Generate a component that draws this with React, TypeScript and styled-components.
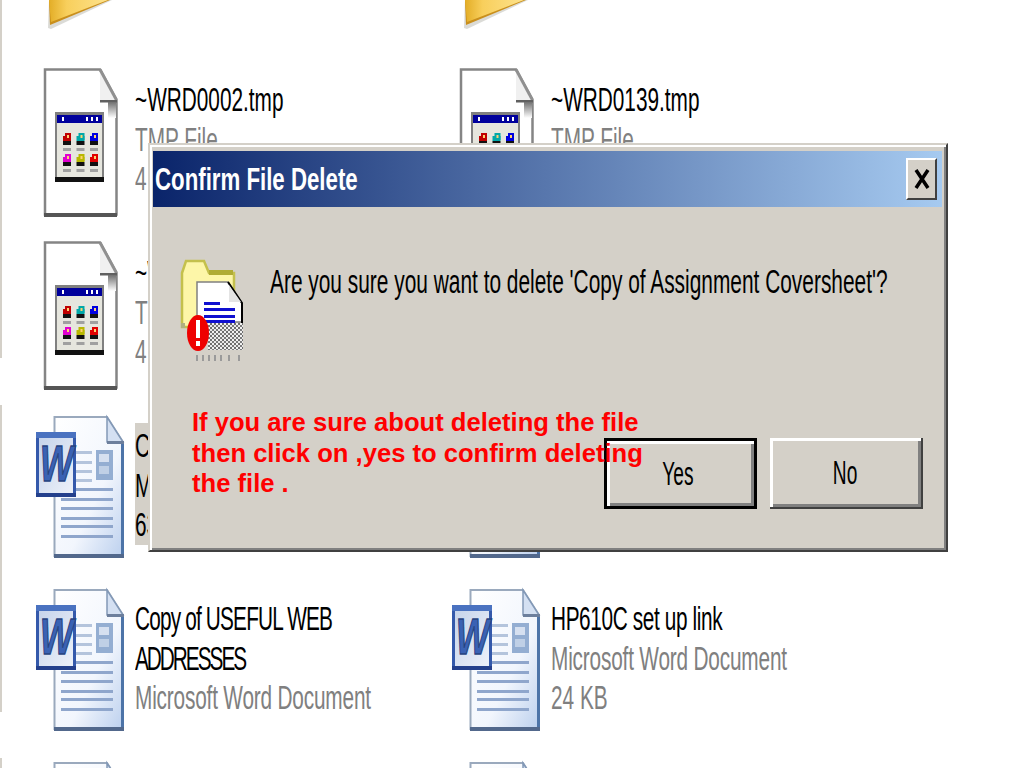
import styled, { createGlobalStyle } from "styled-components";

const GlobalStyle = createGlobalStyle`
    html, body {
        margin: 0;
        background: #fff;
        overflow: hidden;
    }
`

const Page = styled.div`
    position: relative;
    display: flex;
    width: 1024px;
    height: 768px;
    overflow: hidden;
    background: #fff;
    font-family: "Liberation Sans", Arial, sans-serif;
`

const Rail = styled.div`
    display: flex;
    flex-direction: column;
    flex: none;
    width: 2px;
    height: 100%;
`

const RailPiece = styled.div<{ $h: number; $on?: boolean }>`
    flex: none;
    height: ${p => p.$h}px;
    background: ${p => (p.$on ? "#d4d0c8" : "transparent")};
`

const FileGrid = styled.div`
    display: grid;
    grid-template-columns: 416px 416px;
    grid-template-rows: 68px repeat(4, 173px);
    padding-left: 34px;
`

const Tile = styled.div`
    display: flex;
    align-items: flex-start;
    height: 173px;
`

const FolderTile = styled.div`
    height: 68px;
    padding-left: 10px;
`

const IconBox = styled.div`
    flex: none;
    width: 99px;
    svg {
        display: block;
    }
`

const TileText = styled.div<{ $selected?: boolean }>`
    margin-top: ${p => (p.$selected ? 9 : 12)}px;
    padding-top: ${p => (p.$selected ? 3 : 0)}px;
    font-size: 33px;
    line-height: 39.5px;
    white-space: nowrap;
    color: ${p => (p.$selected ? "#000" : "#808080")};
    background: ${p => (p.$selected ? "#d4d0c8" : "transparent")};
    transform: scaleX(0.63);
    transform-origin: left top;
`

const FileName = styled.div<{ $tight?: number }>`
    color: #000;
    letter-spacing: ${p => p.$tight ?? 0}px;
`

const FileMeta = styled.div<{ $tight?: number }>`
    letter-spacing: ${p => p.$tight ?? 0}px;
`

const Dialog = styled.div`
    position: absolute;
    left: 148px;
    top: 143px;
    box-sizing: border-box;
    display: flex;
    flex-direction: column;
    width: 800px;
    height: 409px;
    padding: 6px 4px 0 3px;
    background: #d4d0c8;
    border: 2px solid;
    border-color: #d4d0c8 #404040 #404040 #d4d0c8;
    box-shadow: inset 2px 2px 0 #fff, inset -2px -2px 0 #808080;
`

const TitleBar = styled.div`
    display: flex;
    flex: none;
    align-items: center;
    justify-content: space-between;
    height: 56px;
    padding: 0 5px 0 2px;
    background: linear-gradient(90deg, #0a246a, #a6caf0);
`

const TitleText = styled.div`
    font-size: 32px;
    font-weight: 700;
    color: #fff;
    white-space: nowrap;
    transform: scaleX(0.695);
    transform-origin: left center;
`

const CloseButton = styled.button`
    box-sizing: border-box;
    display: flex;
    flex: none;
    align-items: center;
    justify-content: center;
    width: 31px;
    height: 42px;
    padding: 0;
    background: #d4d0c8;
    border: 2px solid;
    border-color: #fff #404040 #404040 #fff;
    svg {
        display: block;
    }
`

const DialogBody = styled.div`
    display: flex;
    align-items: flex-start;
    gap: 22px;
    padding: 48px 0 0 25px;
`

const DialogIcon = styled.div`
    flex: none;
    width: 70px;
    svg {
        display: block;
    }
`

const Message = styled.div`
    flex: none;
    margin-top: 7px;
    font-size: 33px;
    line-height: 40px;
    color: #000;
    white-space: nowrap;
    transform: scaleX(0.633);
    transform-origin: left top;
`

const Note = styled.div`
    position: absolute;
    left: 42px;
    top: 262px;
    z-index: 2;
    font-size: 25.6px;
    font-weight: 700;
    line-height: 30.5px;
    color: #f00;
    white-space: nowrap;
`

const ButtonRow = styled.div`
    display: flex;
    justify-content: flex-end;
    gap: 13px;
    margin-top: auto;
    padding: 0 19px 41px 0;
`

const DialogButton = styled.button<{ $primary?: boolean }>`
    box-sizing: border-box;
    width: 153px;
    height: 71px;
    padding: ${p => (p.$primary ? "0 6px 0 0" : "0 1px 0 0")};
    font-family: inherit;
    font-size: 33px;
    color: #000;
    background: #d4d0c8;
    border: ${p => (p.$primary ? "3px solid #000" : "0")};
    box-shadow: inset 3px 3px 0 #fff, inset -3px -3px 0 #808080;
    ${p => !p.$primary && "border-bottom: 2px solid #404040; border-right: 2px solid #404040;"}
`

const ButtonLabel = styled.span`
    display: inline-block;
    transform: scaleX(0.58);
`

const Folder = ({ id }: { id: string }) => (
    <svg width="70" height="30" viewBox="0 0 70 30">
        <defs>
            <linearGradient id={`folder${id}`} x1="0" y1="0" x2="1" y2="0">
                <stop offset="0" stopColor="#e3ad26" />
                <stop offset="0.3" stopColor="#f8cf5c" />
                <stop offset="1" stopColor="#fde28c" />
            </linearGradient>
        </defs>
        <polygon points="3,0 66,0 5,29 2,28" fill="#b8b8b0" opacity="0.5" />
        <polygon points="3,0 64,0 4,25" fill="#c98f1c" />
        <polygon points="3,0 62,0 5,22" fill={`url(#folder${id})`} />
    </svg>
)

const appColors = ["#c00000", "#00a8a8", "#0000e0", "#e000d0", "#b8b800", "#e00000"]

const TmpIcon = ({ id }: { id: string }) => (
    <svg width="90" height="150" viewBox="0 0 90 150">
        <defs>
            <linearGradient id={`shade${id}`} x1="0" y1="0" x2="0" y2="1">
                <stop offset="0" stopColor="#707070" />
                <stop offset="1" stopColor="#ffffff" />
            </linearGradient>
        </defs>
        <path d="M9 1.500H64L80.500 32V146.500H9Z" fill="#fff" stroke="#858585" strokeWidth="2.500" />
        <path d="M64 1.500V32H80.500Z" fill="#f0f0f0" />
        <path d="M64 1.500L80.500 32" stroke="#909090" strokeWidth="3" fill="none" />
        <rect x="64" y="32" width="17" height="2.500" fill="#606060" />
        <rect x="72" y="34" width="8" height="16" fill={`url(#shade${id})`} />
        <rect x="8" y="145" width="73" height="4" fill="#555" />
        <rect x="19" y="44" width="49" height="70" fill="#808080" />
        <rect x="21" y="47" width="45" height="8" fill="#00009c" />
        <rect x="26" y="49" width="2" height="4" fill="#fff" />
        <rect x="50" y="49" width="2" height="4" fill="#fff" />
        <rect x="55" y="49" width="2" height="4" fill="#fff" />
        <rect x="60" y="49" width="2" height="4" fill="#fff" />
        <rect x="21" y="55" width="45" height="54" fill="#e6e6de" />
        <rect x="19" y="109" width="49" height="5" fill="#111" />
        {appColors.map((c, i) => {
            const x = 31 + (i % 3) * 13.5
            const y = i < 3 ? 65 : 86
            return (
                <g key={c + i}>
                    <rect x={x - 4} y={y + 3} width="8" height="5" fill={c} />
                    <rect x={x - 2} y={y} width="6" height="7" fill={c} />
                    <rect x={x} y={y + 2} width="2" height="3" fill="#ffd070" />
                    <rect x={x - 4} y={y + 8} width="8" height="4" fill="#111" />
                    <rect x={x - 4} y={y + 15} width="8" height="3" fill="#a0a0a0" />
                </g>
            )
        })}
    </svg>
)

const shortLines = [37, 47, 56, 65]
const longLines = [74, 84, 93, 103, 111, 121]

const WordIcon = ({ id, badge = true }: { id: string; badge?: boolean }) => (
    <svg width="90" height="146" viewBox="0 0 90 146">
        <defs>
            <linearGradient id={`page${id}`} x1="0" y1="0" x2="1" y2="1">
                <stop offset="0" stopColor="#ffffff" />
                <stop offset="0.6" stopColor="#f2f6fd" />
                <stop offset="1" stopColor="#bcd0ee" />
            </linearGradient>
            <linearGradient id={`badge${id}`} x1="0" y1="0" x2="1" y2="1">
                <stop offset="0" stopColor="#c4d2ea" />
                <stop offset="1" stopColor="#eef2fa" />
            </linearGradient>
        </defs>
        <path d="M18.500 3H71L87 28V142H18.500Z" fill={`url(#page${id})`} stroke="#9aa9bd" strokeWidth="2" />
        <path d="M71 3V28H87Z" fill="#d4e0f2" stroke="#8298b6" strokeWidth="1.500" />
        <rect x="71" y="27" width="17" height="3" fill="#6d7f9c" />
        <rect x="85" y="30" width="3" height="112" fill="#4d74a8" />
        <rect x="18" y="140" width="70" height="4" fill="#52688c" />
        <rect x="60" y="36" width="17" height="30" fill="#94aed2" />
        <rect x="63" y="40" width="10" height="8" fill="#d6e0f0" />
        <rect x="63" y="52" width="10" height="8" fill="#c0d0e6" />
        {shortLines.map(y => (
            <rect key={y} x="40" y={y} width="16" height="3" fill="#b4c4dc" />
        ))}
        {longLines.map(y => (
            <rect key={y} x="25" y={y} width="52" height="3" fill="#8fa6cc" />
        ))}
        {badge && (
            <>
                <rect x="1.500" y="19.500" width="37" height="62" fill={`url(#badge${id})`} stroke="#3459ab" strokeWidth="3" />
                <rect x="0" y="18" width="40" height="6" fill="#4a72c0" />
                <rect x="0" y="79" width="40" height="4" fill="#24408c" />
                <text
                    x="0"
                    y="0"
                    transform="translate(4 67) scale(0.98 1.400)"
                    fontFamily="Liberation Sans, sans-serif"
                    fontSize="36"
                    fontWeight="700"
                    fontStyle="italic"
                    fill="#3a62b4"
                    stroke="#26427f"
                    strokeWidth="1"
                >
                    W
                </text>
            </>
        )}
    </svg>
)

const DeleteIcon = () => (
    <svg width="70" height="108" viewBox="0 0 70 108">
        <defs>
            <pattern id="dither" width="4" height="4" patternUnits="userSpaceOnUse">
                <rect width="2" height="2" fill="#6e6e6e" />
                <rect x="2" y="2" width="2" height="2" fill="#7a7a7a" />
                <rect x="2" width="2" height="2" fill="#f2f2f2" />
                <rect y="2" width="2" height="2" fill="#e8e8e8" />
            </pattern>
        </defs>
        <path d="M4 18L8 6H26L31 18H56V72H4Z" fill="#fdf6a8" stroke="#c4c04c" strokeWidth="2.500" />
        <rect x="31" y="15" width="24" height="5" fill="#b0ac34" />
        <path d="M19 27H50L64 48V67H19Z" fill="#fff" stroke="#808080" strokeWidth="1.500" />
        <path d="M50 27L64 48V70" fill="none" stroke="#000" strokeWidth="2" />
        <path d="M51 30V47H63" fill="#e4e4e4" stroke="none" />
        <rect x="26" y="47" width="16" height="3" fill="#1010d0" />
        <rect x="26" y="53" width="31" height="3" fill="#1010d0" />
        <rect x="26" y="60" width="31" height="3" fill="#1010d0" />
        <rect x="26" y="65" width="31" height="3" fill="#1010d0" />
        <rect x="30" y="68" width="35" height="27" fill="url(#dither)" />
        <rect x="3" y="68" width="4" height="5" fill="#b0b080" />
        <ellipse cx="20" cy="78" rx="11" ry="18" fill="#ee0000" />
        <rect x="18" y="65" width="4" height="18" fill="#fff" />
        <rect x="18" y="86" width="4" height="5" fill="#fff" />
        {[18, 24, 30, 36, 42, 50, 60].map(x => (
            <rect key={x} x={x} y="100" width="2" height="6" fill="#9a9a9a" />
        ))}
    </svg>
)

const CloseGlyph = () => (
    <svg width="16" height="20" viewBox="0 0 16 20">
        <path d="M2 1L14 19M14 1L2 19" stroke="#000" strokeWidth="3.500" fill="none" />
    </svg>
)

export default function App() {
    return (
        <Page>
            <GlobalStyle />
            <Rail>
                <RailPiece $h={358} $on />
                <RailPiece $h={47} />
                <RailPiece $h={307} $on />
                <RailPiece $h={46} />
                <RailPiece $h={10} $on />
            </Rail>
            <FileGrid>
                <FolderTile><Folder id="a" /></FolderTile>
                <FolderTile><Folder id="b" /></FolderTile>

                <Tile>
                    <IconBox><TmpIcon id="a" /></IconBox>
                    <TileText>
                        <FileName>~WRD0002.tmp</FileName>
                        <FileMeta>TMP File</FileMeta>
                        <FileMeta>4 KB</FileMeta>
                    </TileText>
                </Tile>
                <Tile>
                    <IconBox><TmpIcon id="b" /></IconBox>
                    <TileText>
                        <FileName>~WRD0139.tmp</FileName>
                        <FileMeta>TMP File</FileMeta>
                        <FileMeta>4 KB</FileMeta>
                    </TileText>
                </Tile>

                <Tile>
                    <IconBox><TmpIcon id="c" /></IconBox>
                    <TileText>
                        <FileName>~WRD0140.tmp</FileName>
                        <FileMeta>TMP File</FileMeta>
                        <FileMeta>4 KB</FileMeta>
                    </TileText>
                </Tile>
                <Tile />

                <Tile>
                    <IconBox><WordIcon id="a" /></IconBox>
                    <TileText $selected>
                        <FileName>Copy of Assignment Coversheet</FileName>
                        <FileMeta>Microsoft Word Document</FileMeta>
                        <FileMeta>63 KB</FileMeta>
                    </TileText>
                </Tile>
                <Tile>
                    <IconBox><WordIcon id="b" /></IconBox>
                </Tile>

                <Tile>
                    <IconBox><WordIcon id="c" /></IconBox>
                    <TileText>
                        <FileName $tight={-1.3}>Copy of USEFUL WEB</FileName>
                        <FileName $tight={-3.2}>ADDRESSES</FileName>
                        <FileMeta $tight={-0.28}>Microsoft Word Document</FileMeta>
                    </TileText>
                </Tile>
                <Tile>
                    <IconBox><WordIcon id="d" /></IconBox>
                    <TileText>
                        <FileName $tight={-0.6}>HP610C set up link</FileName>
                        <FileMeta $tight={-0.28}>Microsoft Word Document</FileMeta>
                        <FileMeta>24 KB</FileMeta>
                    </TileText>
                </Tile>

                <Tile>
                    <IconBox><WordIcon id="e" badge={false} /></IconBox>
                </Tile>
                <Tile>
                    <IconBox><WordIcon id="f" badge={false} /></IconBox>
                </Tile>
            </FileGrid>

            <Dialog>
                <TitleBar>
                    <TitleText>Confirm File Delete</TitleText>
                    <CloseButton><CloseGlyph /></CloseButton>
                </TitleBar>
                <DialogBody>
                    <DialogIcon><DeleteIcon /></DialogIcon>
                    <Message>Are you sure you want to delete 'Copy of Assignment Coversheet'?</Message>
                </DialogBody>
                <Note>
                    If you are sure about deleting the file<br />
                    then click on ,yes to confirm deleting<br />
                    the file .
                </Note>
                <ButtonRow>
                    <DialogButton $primary><ButtonLabel>Yes</ButtonLabel></DialogButton>
                    <DialogButton><ButtonLabel>No</ButtonLabel></DialogButton>
                </ButtonRow>
            </Dialog>
        </Page>
    )
}
